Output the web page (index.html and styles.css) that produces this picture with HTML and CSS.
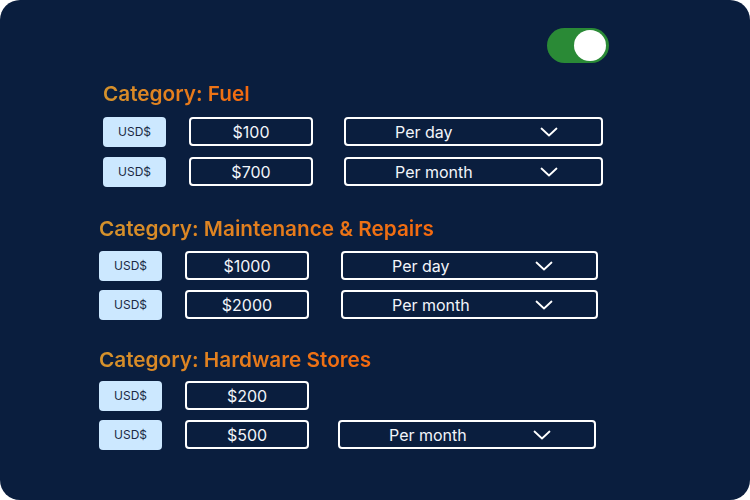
FILE: index.html
```html
<!DOCTYPE html>
<html lang="en">
<head>
<meta charset="utf-8">
<title>Budget categories</title>
<link rel="stylesheet" href="styles.css">
</head>
<body>
<div class="card">
  <div class="toggle-row">
    <div class="toggle"><span class="knob"></span></div>
  </div>

  <section class="section s1">
    <h2 class="heading"><span>Category: Fuel</span></h2>
    <div class="rows">
      <div class="row">
        <div class="badge">USD$</div>
        <div class="amount">$100</div>
        <div class="select"><span>Per day</span><svg class="chev" viewBox="0 0 18 10" width="18" height="10"><path d="M1.5 1.5 L9 8.5 L16.5 1.5" fill="none" stroke="#fff" stroke-width="1.8" stroke-linecap="round" stroke-linejoin="round"/></svg></div>
      </div>
      <div class="row">
        <div class="badge">USD$</div>
        <div class="amount">$700</div>
        <div class="select"><span>Per month</span><svg class="chev" viewBox="0 0 18 10" width="18" height="10"><path d="M1.5 1.5 L9 8.5 L16.5 1.5" fill="none" stroke="#fff" stroke-width="1.8" stroke-linecap="round" stroke-linejoin="round"/></svg></div>
      </div>
    </div>
  </section>

  <section class="section s2">
    <h2 class="heading"><span>Category: Maintenance &amp; Repairs</span></h2>
    <div class="rows">
      <div class="row">
        <div class="badge">USD$</div>
        <div class="amount">$1000</div>
        <div class="select"><span>Per day</span><svg class="chev" viewBox="0 0 18 10" width="18" height="10"><path d="M1.5 1.5 L9 8.5 L16.5 1.5" fill="none" stroke="#fff" stroke-width="1.8" stroke-linecap="round" stroke-linejoin="round"/></svg></div>
      </div>
      <div class="row">
        <div class="badge">USD$</div>
        <div class="amount">$2000</div>
        <div class="select"><span>Per month</span><svg class="chev" viewBox="0 0 18 10" width="18" height="10"><path d="M1.5 1.5 L9 8.5 L16.5 1.5" fill="none" stroke="#fff" stroke-width="1.8" stroke-linecap="round" stroke-linejoin="round"/></svg></div>
      </div>
    </div>
  </section>

  <section class="section s3">
    <h2 class="heading"><span>Category: Hardware Stores</span></h2>
    <div class="rows">
      <div class="row">
        <div class="badge">USD$</div>
        <div class="amount">$200</div>
      </div>
      <div class="row">
        <div class="badge">USD$</div>
        <div class="amount">$500</div>
        <div class="select"><span>Per month</span><svg class="chev" viewBox="0 0 18 10" width="18" height="10"><path d="M1.5 1.5 L9 8.5 L16.5 1.5" fill="none" stroke="#fff" stroke-width="1.8" stroke-linecap="round" stroke-linejoin="round"/></svg></div>
      </div>
    </div>
  </section>
</div>
</body>
</html>
```

FILE: styles.css
```css
* { box-sizing: border-box; }
html, body { margin: 0; padding: 0; background: #ffffff; }
body { font-family: Inter, "Noto Sans", sans-serif; }

.card {
  width: 750px;
  height: 500px;
  background: #0a1e3e;
  border-radius: 20px;
  padding-top: 28px;
  overflow: hidden;
}

.toggle-row {
  display: flex;
  justify-content: flex-end;
  padding-right: 141px;
}
.toggle {
  width: 62px;
  height: 35px;
  border-radius: 18px;
  background: #2a8a36;
  display: flex;
  align-items: center;
  justify-content: flex-end;
  padding-right: 3px;
}
.knob {
  width: 32px;
  height: 31px;
  border-radius: 50%;
  background: #ffffff;
}

.section { padding-left: 99px; }
.s1 { padding-left: 103px; margin-top: 19px; }
.s2 { margin-top: 31px; }
.s3 { margin-top: 29px; }

.heading {
  margin: 0;
  font-size: 20.75px;
  line-height: 24px;
  font-weight: 600;
}
.heading span {
  background: linear-gradient(90deg, #d4922c 0%, #f5690e 100%);
  -webkit-background-clip: text;
  background-clip: text;
  color: transparent;
}

.rows {
  display: flex;
  flex-direction: column;
  gap: 10px;
  margin-top: 10px;
}
.s1 .rows { gap: 11px; margin-top: 11px; }
.s3 .rows { margin-top: 9px; }

.row {
  display: flex;
  align-items: center;
  height: 29px;
}

.badge {
  width: 63px;
  height: 30px;
  border-radius: 4px;
  background: #cce8ff;
  color: #1b2a44;
  font-size: 12px;
  display: flex;
  align-items: center;
  justify-content: center;
}

.amount {
  width: 124px;
  height: 29px;
  margin-left: 23px;
  border: 2px solid #ffffff;
  border-radius: 4px;
  color: #f2f5fa;
  font-size: 16px;
  display: flex;
  align-items: center;
  justify-content: center;
}

.select {
  width: 259px;
  height: 29px;
  margin-left: 31px;
  border: 2px solid #ffffff;
  border-radius: 4px;
  color: #f2f5fa;
  font-size: 16px;
  display: flex;
  align-items: center;
  justify-content: space-between;
  padding: 0 43px 0 49px;
}
.s2 .select { width: 257px; margin-left: 32px; }
.s3 .select { width: 258px; margin-left: 29px; }

.chev { display: block; }
```
